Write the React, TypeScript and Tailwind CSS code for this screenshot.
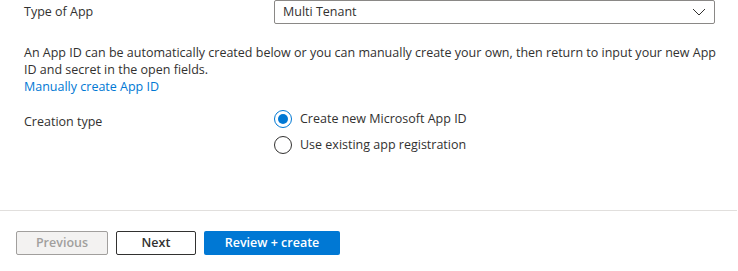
import { useState } from 'react'

const font = { fontFamily: '"Segoe UI", "Open Sans", "Noto Sans", sans-serif' }

function Radio({ checked, label, onClick }: { checked: boolean; label: string; onClick: () => void }) {
  return (
    <button onClick={onClick} className="flex items-center gap-[8px] h-[26px] text-left">
      <span
        className={`w-[18px] h-[18px] rounded-full border flex items-center justify-center ${checked ? 'border-[#0078d4]' : 'border-[#323130]'}`}
      >
        {checked && <span className="w-[10px] h-[10px] rounded-full bg-[#0078d4]" />}
      </span>
      <span>{label}</span>
    </button>
  )
}

export default function App() {
  const [creation, setCreation] = useState<'new' | 'existing'>('new')

  return (
    <div className="w-[738px] h-[271px] bg-white text-[12.5px] text-[#323130] flex flex-col" style={font}>
      <div className="flex-1 pl-[24px] pr-[23px]">
        <div className="flex items-center h-[24px]">
          <div className="w-[250px] pt-[1px]">Type of App</div>
          <div className="flex-1 h-[24px] border border-[#8a8886] rounded-[2px] flex items-center justify-between pl-[8px] pr-[8px]">
            <span>Multi Tenant</span>
            <svg width="14" height="8" viewBox="0 0 14 8" fill="none">
              <path d="M1 1l6 6 6-6" stroke="#323130" strokeWidth="1" />
            </svg>
          </div>
        </div>

        <p className="mt-[20px] leading-[17px] w-[705px]">
          An App ID can be automatically created below or you can manually create your own, then return to input your new App ID and secret in the open fields.
        </p>
        <a href="#" className="block leading-[17px] text-[#0078d4]">Manually create App ID</a>

        <div className="flex mt-[11px]">
          <div className="w-[250px] pt-[7px]">Creation type</div>
          <div className="flex flex-col">
            <Radio checked={creation === 'new'} label="Create new Microsoft App ID" onClick={() => setCreation('new')} />
            <Radio checked={creation === 'existing'} label="Use existing app registration" onClick={() => setCreation('existing')} />
          </div>
        </div>
      </div>

      <div className="border-t border-[#e1dfdd] mr-[1px] h-[61px] flex items-start gap-[8px] pl-[16px] pt-[20px]">
        <button disabled className="w-[92px] h-[24px] border border-[#a19f9d] bg-[#f3f2f1] text-[#a19f9d] font-semibold rounded-[2px]">
          Previous
        </button>
        <button className="w-[80px] h-[24px] border border-[#323130] bg-white text-[#323130] font-semibold rounded-[2px]">
          Next
        </button>
        <button className="w-[136px] h-[24px] bg-[#0078d4] text-white font-semibold rounded-[2px]">
          Review + create
        </button>
      </div>
    </div>
  )
}
